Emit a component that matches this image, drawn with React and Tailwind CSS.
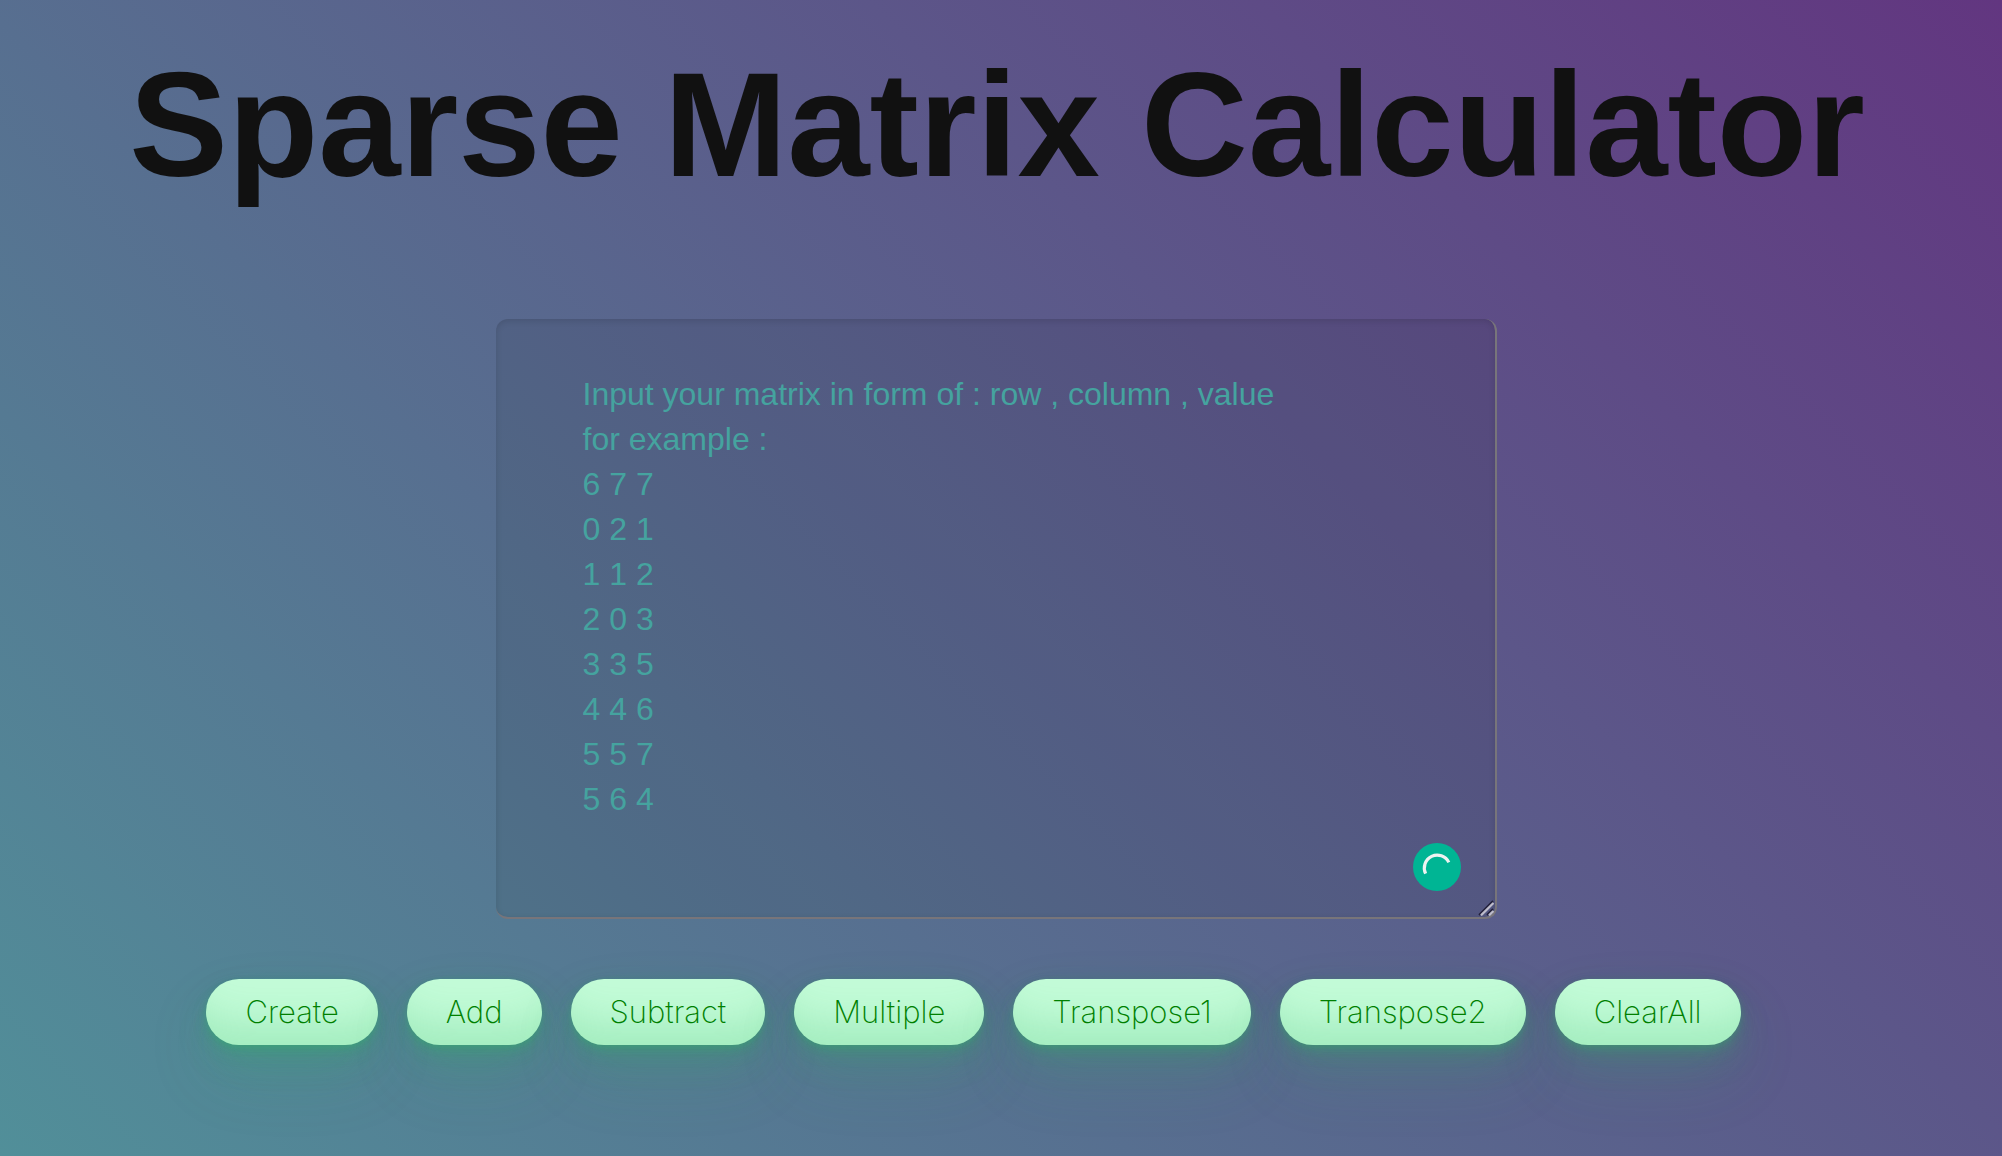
const sample = `Input your matrix in form of : row , column , value
for example :
6 7 7
0 2 1
1 1 2
2 0 3
3 3 5
4 4 6
5 5 7
5 6 4`;

const actions = ["Create", "Add", "Subtract", "Multiple", "Transpose1", "Transpose2", "ClearAll"];

function Spinner() {
  return (
    <svg className="absolute right-9 bottom-7 size-12" viewBox="0 0 48 48" fill="none" aria-hidden="true">
      <circle cx="24" cy="24" r="24" fill="#00b594" />
      <path d="M12.6 30.6A12.6 12.6 0 0 1 35.8 19.4" stroke="#eef3f1" strokeWidth="3.2" />
    </svg>
  );
}

function ResizeGrip() {
  return (
    <svg className="pointer-events-none absolute right-[3px] bottom-[3px] size-4" viewBox="0 0 16 16" fill="none" aria-hidden="true">
      <path d="M1 15L15 1M9 15L15 9" stroke="#23213b" strokeWidth="1.8" />
      <path d="M3 15.4L15.4 3M11 15.4L15.4 11" stroke="#bdbccb" strokeWidth="2.2" />
    </svg>
  );
}

export default function App() {
  return (
    <main className="flex min-h-screen flex-col items-center bg-linear-[45deg,#518f99,#623680] pt-[50px] font-['Liberation_Sans',Arial,sans-serif]">
      <h1 className="pr-2 text-center text-[148px] leading-[150px] font-bold whitespace-nowrap text-[#111111]">
        Sparse Matrix Calculator
      </h1>
      <div className="relative mt-[119px] mr-[10px] w-1/2">
        <textarea
          aria-label="Sparse matrix"
          spellCheck={false}
          defaultValue={sample}
          className="block h-[600px] w-full resize-none rounded-xl border-r-2 border-b-2 border-[#78757a] bg-black/7 px-[87px] py-[53px] text-[32px] leading-[45px] text-[#45a39f] shadow-[inset_0_2px_6px_rgba(0,0,0,0.12)] outline-none"
        />
        <Spinner />
        <ResizeGrip />
      </div>
      <div className="mt-[60px] flex flex-wrap justify-center gap-[29px] pr-[55px] pb-16">
        {actions.map((label) => (
          <button
            key={label}
            type="button"
            className="h-[66px] cursor-pointer rounded-full bg-[#c2fbd7] px-[39px] font-[Inter,sans-serif] text-[31px] leading-9 font-extralight text-[#008000] shadow-[inset_0_-50px_36px_-28px_rgba(44,187,99,0.2),0_2px_4px_rgba(44,187,99,0.15),0_4px_8px_rgba(44,187,99,0.15),0_8px_16px_rgba(44,187,99,0.15),0_16px_32px_rgba(44,187,99,0.15),0_32px_64px_rgba(44,187,99,0.15)]"
          >
            {label}
          </button>
        ))}
      </div>
    </main>
  );
}
